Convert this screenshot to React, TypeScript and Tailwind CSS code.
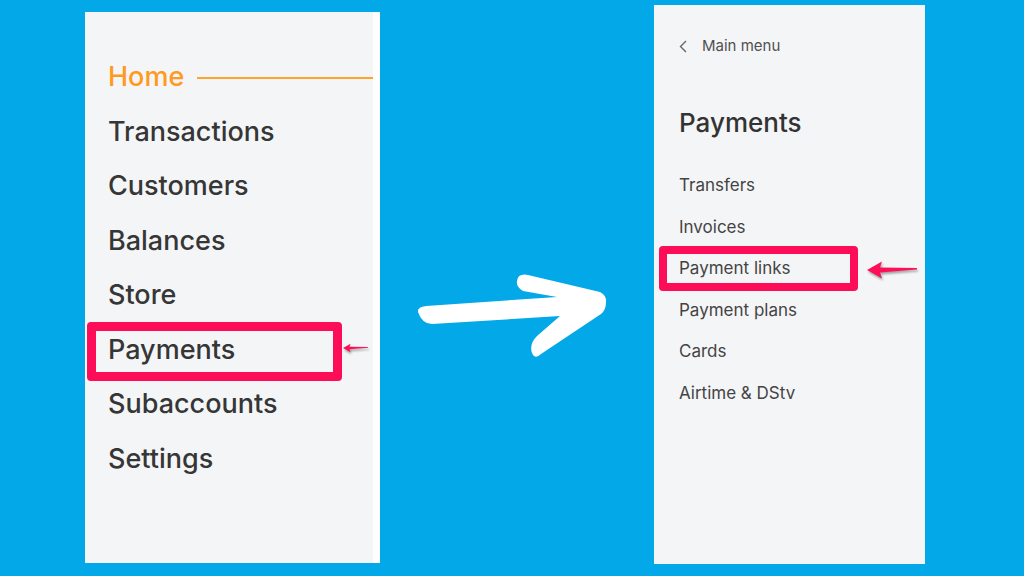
const mainItems = ["Transactions", "Customers", "Balances", "Store", "Payments", "Subaccounts", "Settings"];
const subItems = ["Transfers", "Invoices", "Payment links", "Payment plans", "Cards", "Airtime & DStv"];

const PinkArrow = ({ className }: { className: string }) => (
  <svg className={className} viewBox="0 0 50 18" fill="none">
    <path d="M0 9 L15 0.5 L13 6.5 L50 7 L50 8.5 L13 11.5 L15 17.5 Z" fill="#fd1058" />
  </svg>
);

export default function App() {
  return (
    <div
      className="w-[1024px] h-[576px] bg-[#02a8e7] flex items-start overflow-hidden"
      style={{ fontFamily: "Inter, 'Noto Sans', sans-serif" }}
    >
      {/* Main menu panel */}
      <div className="relative ml-[85px] mt-[12px] w-[295px] h-[551px] bg-[#f4f5f7] border-r-[7px] border-white pt-[38px] pl-[23px]">
        <div className="flex items-center leading-[54.5px] text-[27px] font-medium text-[#ff9a1f]">
          <span>Home</span>
          <div className="flex-1 h-[2px] bg-[#ffa52e] ml-[13px] translate-y-[1px]" />
        </div>
        {mainItems.map((item) => (
          <div key={item} className="leading-[54.5px] text-[27px] font-medium text-[#363636]">
            {item}
          </div>
        ))}
        <div className="absolute left-[2px] top-[310px] w-[255px] h-[59px] border-[9px] border-[#fd0d57] rounded-[4px]" />
        <PinkArrow className="absolute left-[258px] top-[331px] w-[25px] h-[10px] drop-shadow-[1px_2px_1px_rgba(0,0,0,0.35)]" />
      </div>

      {/* Brush arrow */}
      <div className="w-[274px] h-[576px] shrink-0">
        <svg width="274" height="576" viewBox="380 0 274 576">
          <path
            d="M418 312 Q417 307 426 306 L557 297 L523 291 Q516 287 517 281 Q518 273 528 275 L600 292 Q607 296 606 302 Q606 310 601 314 L541 354 Q535 360 532 353 Q529 344 537 336 L560 316 L432 324 Q422 324 418 312 Z"
            fill="#ffffff"
          />
        </svg>
      </div>

      {/* Payments submenu panel */}
      <div className="relative mt-[5px] w-[271px] h-[559px] bg-[#f4f5f7] pt-[31px] pl-[25px] text-[#3d3d3d]">
        <div className="flex items-center leading-[20px] text-[15px] text-[#505050]">
          <svg className="w-[9px] h-[13px] mr-[14px]" viewBox="0 0 9 13" fill="none">
            <path d="M7 1 L1.5 6.5 L7 12" stroke="#666" strokeWidth="1.4" />
          </svg>
          <span>Main menu</span>
        </div>
        <div className="mt-[52px] leading-[30px] text-[26px] font-medium text-[#333]">Payments</div>
        <div className="mt-[27px]">
          {subItems.map((item) => (
            <div key={item} className="leading-[41.6px] text-[17px] text-[#444]">
              {item}
            </div>
          ))}
        </div>
        <div className="absolute left-[5px] top-[241px] w-[199px] h-[45px] border-[8px] border-[#fd0d57] rounded-[4px]" />
        <PinkArrow className="absolute left-[213px] top-[256px] w-[50px] h-[18px] drop-shadow-[1px_2px_1px_rgba(0,0,0,0.35)]" />
      </div>
    </div>
  );
}
